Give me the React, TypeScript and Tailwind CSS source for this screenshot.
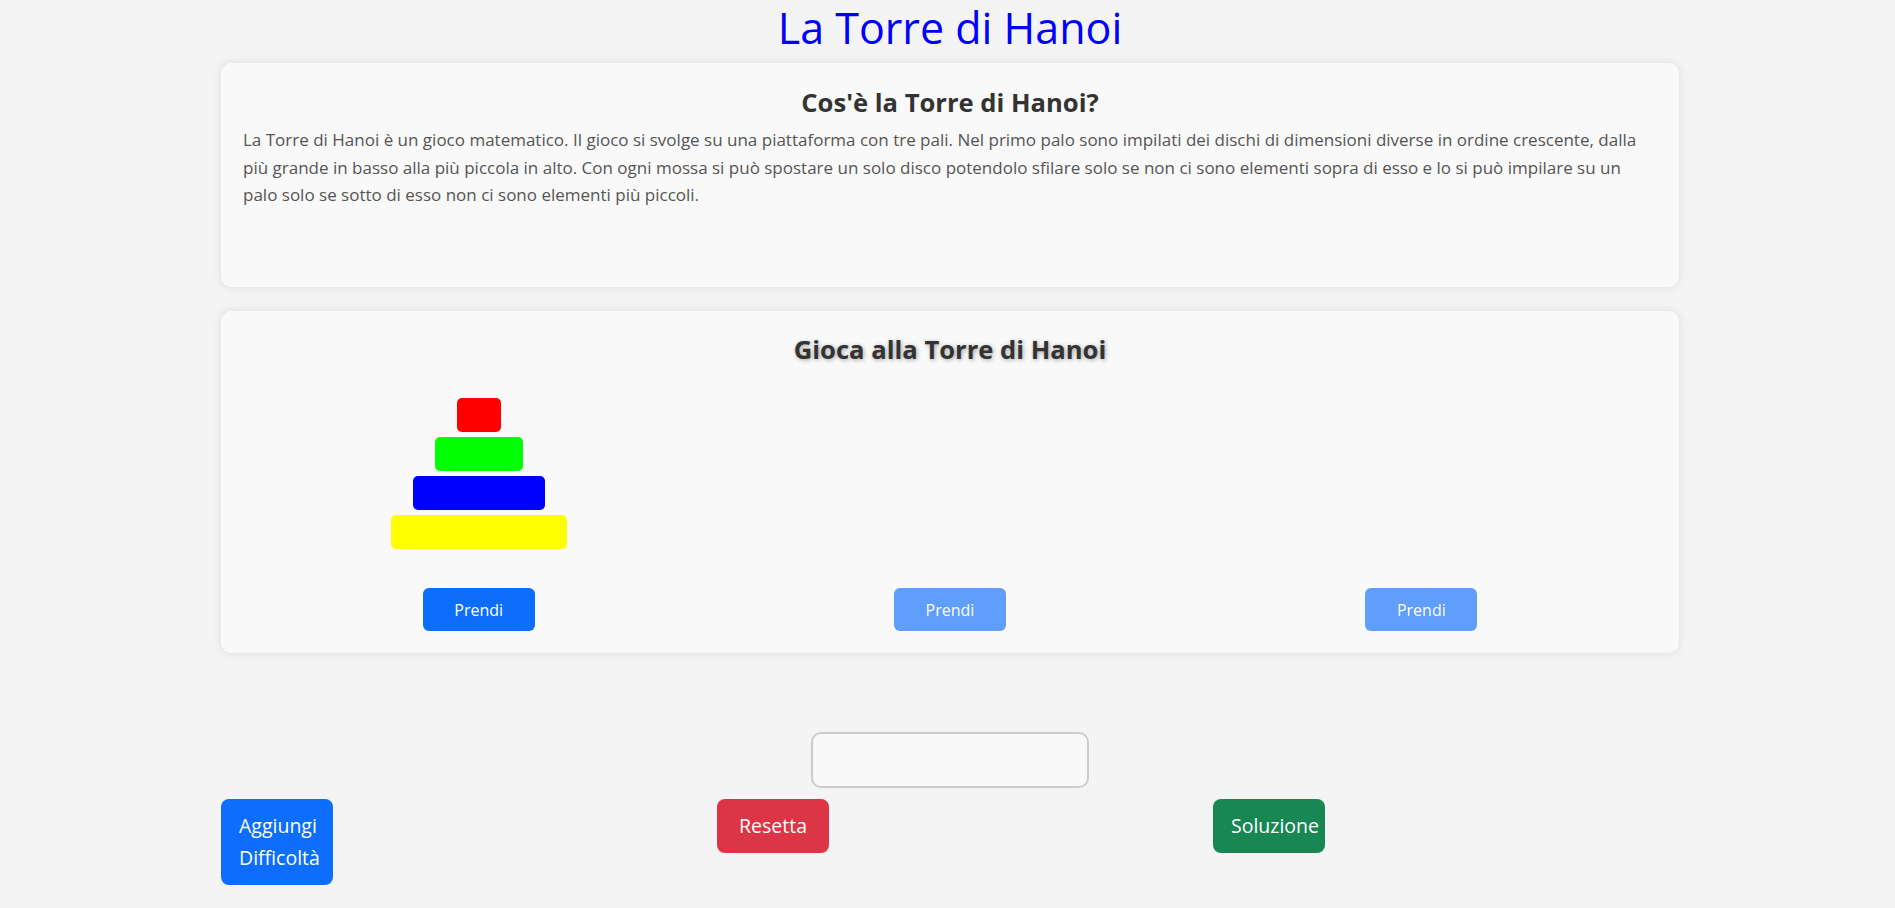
import React from "react";

const disks = [
  { w: "w-[44px]", c: "bg-[#ff0000]" },
  { w: "w-[88px]", c: "bg-[#00ff00]" },
  { w: "w-[132px]", c: "bg-[#0000ff]" },
  { w: "w-[176px]", c: "bg-[#ffff00]" },
];

const Tower = ({ stack, active }: { stack: typeof disks; active: boolean }) => {
  return (
    <div className="flex flex-col items-center">
      <div className="h-[184px] flex flex-col justify-end items-center gap-[5px]">
        {stack.map((d, i) => (
          <div key={i} className={`${d.w} ${d.c} h-[34px] rounded-[5px]`} />
        ))}
      </div>
      <button
        className={`mt-[39px] w-[112px] h-[43px] rounded-[6px] bg-[#0d6efd] text-white text-[16px] ${active ? "" : "opacity-65"}`}
      >
        Prendi
      </button>
    </div>
  );
};

const App = () => {
  return (
    <div className="min-h-screen bg-[#f4f4f4] font-['Open_Sans',sans-serif] pb-[20px]">
      <h1 className="text-center text-[#0000ff] text-[43px] leading-[48px] pt-[4px] mb-[11px] ml-[5px]">
        La Torre di Hanoi
      </h1>

      <div className="ml-[221px] w-[1458px] flex flex-col">
        {/* info card */}
        <div className="h-[224px] rounded-[10px] bg-[#f9f9f9] shadow-[0_0_10px_rgba(0,0,0,0.1)] pl-[22px] pr-[26px] pt-[24px]">
          <h2 className="text-center text-[#333] font-bold text-[25.6px] leading-[31px] mb-[8px] ml-[4px]">
            Cos'è la Torre di Hanoi?
          </h2>
          <p className="text-[#555] text-[17px] leading-[27.5px]">
            La Torre di Hanoi è un gioco matematico. Il gioco si svolge su una piattaforma con tre pali. Nel primo palo sono
            impilati dei dischi di dimensioni diverse in ordine crescente, dalla più grande in basso alla più piccola in alto.
            Con ogni mossa si può spostare un solo disco potendolo sfilare solo se non ci sono elementi sopra di esso e lo si
            può impilare su un palo solo se sotto di esso non ci sono elementi più piccoli.
          </p>
        </div>

        {/* game card */}
        <div className="mt-[24px] rounded-[10px] bg-[#f9f9f9] shadow-[0_0_10px_rgba(0,0,0,0.1)] px-[22px] pt-[23px] pb-[22px]">
          <h2 className="text-center text-[#333] font-bold text-[25.6px] leading-[31px] [text-shadow:1px_1px_4px_rgba(0,0,0,0.35)]">
            Gioca alla Torre di Hanoi
          </h2>
          <div className="grid grid-cols-3">
            <Tower stack={disks} active={true} />
            <Tower stack={[]} active={false} />
            <Tower stack={[]} active={false} />
          </div>
        </div>

        {/* controls */}
        <input
          type="text"
          className="mt-[79px] mx-auto w-[278px] h-[56px] rounded-[10px] border-2 border-[#ccc] bg-[#f9f9f9] outline-none"
        />
        <div className="mt-[11px] grid grid-cols-3 gap-x-[30px] items-start">
          <button className="w-[112px] rounded-[8px] bg-[#0d6efd] text-white text-[19.5px] leading-[32px] py-[11px] px-[18px]">
            Aggiungi Difficoltà
          </button>
          <button className="w-[112px] rounded-[8px] bg-[#dc3545] text-white text-[19.5px] leading-[32px] py-[11px] px-[18px]">
            Resetta
          </button>
          <button className="w-[112px] rounded-[8px] bg-[#198754] text-white text-[19.5px] leading-[32px] py-[11px] px-[18px] overflow-hidden text-left whitespace-nowrap">
            Soluzione
          </button>
        </div>
      </div>
    </div>
  );
};

export default App;
